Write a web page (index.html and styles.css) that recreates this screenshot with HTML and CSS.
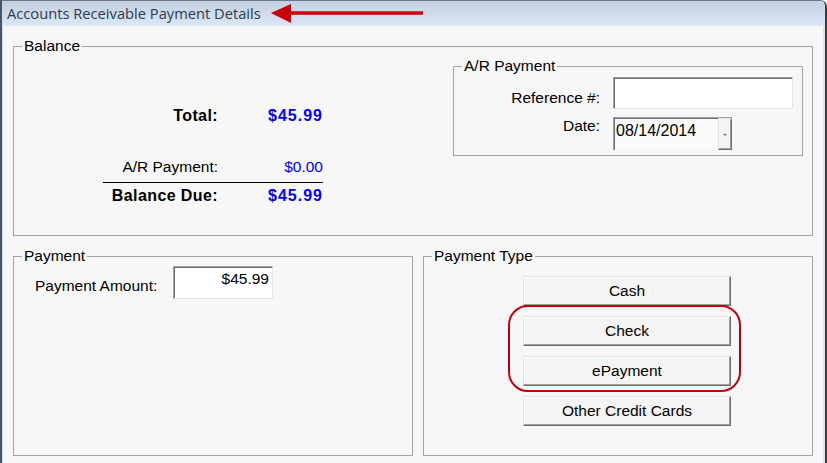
FILE: index.html
```html
<!DOCTYPE html>
<html lang="en">
<head>
<meta charset="utf-8">
<title>Accounts Receivable Payment Details</title>
<link rel="stylesheet" href="styles.css">
</head>
<body>
<div class="window">
  <div class="titlebar">
    <span class="title">Accounts Receivable Payment Details</span>
    <svg class="callout-arrow" width="152" height="21" viewBox="0 0 152 21" aria-hidden="true">
      <path d="M0 10 L20 1 L20 8.3 L152 8.3 L152 11.7 L20 11.7 L20 20 Z" fill="#c8000b"/>
    </svg>
  </div>
  <div class="client">
    <fieldset class="group balance">
      <legend>Balance</legend>
      <div class="balance-body">
        <div class="summary">
          <div class="sum-row total"><span class="lbl">Total:</span><span class="val">$45.99</span></div>
          <div class="sum-row applied"><span class="lbl">A/R Payment:</span><span class="val">$0.00</span></div>
          <div class="sum-row due"><span class="lbl">Balance Due:</span><span class="val">$45.99</span></div>
        </div>
        <fieldset class="group ar">
          <legend>A/R Payment</legend>
          <div class="ar-grid">
            <span class="ref-label">Reference #:</span>
            <div class="textbox ref-box"></div>
            <span class="date-label">Date:</span>
            <div class="datebox">
              <span class="date-text">08/14/2014</span>
              <span class="drop-btn"><span class="drop-mark"></span></span>
            </div>
          </div>
        </fieldset>
      </div>
    </fieldset>
    <div class="lower">
      <fieldset class="group payment">
        <legend>Payment</legend>
        <div class="payment-body">
          <span class="amount-label">Payment Amount:</span>
          <div class="textbox amount-box">$45.99</div>
        </div>
      </fieldset>
      <fieldset class="group ptype">
        <legend>Payment Type</legend>
        <div class="ptype-body">
          <div class="btns">
            <div class="btn" role="button" tabindex="0">Cash</div>
            <div class="btn" role="button" tabindex="0">Check</div>
            <div class="btn" role="button" tabindex="0">ePayment</div>
            <div class="btn" role="button" tabindex="0">Other Credit Cards</div>
            <span class="ring" aria-hidden="true"></span>
          </div>
        </div>
      </fieldset>
    </div>
  </div>
</div>
</body>
</html>
```
FILE: styles.css
```css
html, body {
  margin: 0;
  padding: 0;
  background: #f7f7f7;
}

body {
  font-family: "Liberation Sans", Arial, sans-serif;
  font-size: 15.5px;
  color: #000;
}

.window {
  box-sizing: border-box;
  width: 827px;
  height: 463px;
  display: flex;
  flex-direction: column;
  border-left: 2px solid #4a5466;
  border-right: 2px solid #3c3c3c;
  border-top-right-radius: 7px;
  overflow: hidden;
  background: #f7f7f7;
}

.titlebar {
  height: 26px;
  flex: none;
  display: flex;
  align-items: flex-start;
  padding-left: 5px;
  background: linear-gradient(#c3d0e0, #dbe7f5);
  border-top: 1px solid #6b7585;
  box-sizing: border-box;
}

.title {
  font-family: "Open Sans", "Noto Sans", sans-serif;
  font-size: 14.7px;
  line-height: 25px;
  color: #2e3b4e;
  white-space: nowrap;
}

.callout-arrow {
  display: block;
  margin-left: 10px;
  margin-top: 2px;
  flex: none;
}

.client {
  flex: 1;
  display: flex;
  flex-direction: column;
  gap: 11px;
  padding: 11px 10px 0 10px;
  border-left: 1px solid #cddbed;
  border-right: 2px solid #d6e4f4;
  background: #f7f7f7;
}

/* group boxes */
.group {
  box-sizing: border-box;
  margin: 0;
  padding: 0;
  min-width: 0;
  border: 1px solid #a3a3a3;
}

.group > legend {
  margin-left: 8px;
  padding: 0 2px;
  line-height: 18px;
  font-size: 15.5px;
}

.balance {
  height: 199px;
}

.balance-body {
  display: flex;
  justify-content: space-between;
  align-items: flex-start;
  padding: 2px 9px 0 0;
}

.summary {
  margin-left: 89px;
  padding-top: 50px;
  width: 220px;
}

.sum-row {
  display: grid;
  grid-template-columns: 115px 105px;
  text-align: right;
  line-height: 18px;
}

.sum-row .val {
  color: #0000f5;
}

.total, .due {
  font-weight: bold;
  font-size: 16px;
  letter-spacing: 0.4px;
}

.total .val, .due .val {
  letter-spacing: 1px;
}

.applied {
  margin-top: 33px;
  padding-bottom: 6px;
  border-bottom: 1px solid #000;
}

.due {
  margin-top: 4px;
}

.ar {
  width: 350px;
  flex: none;
}

.ar-grid {
  display: grid;
  grid-template-columns: 146px 180px;
  column-gap: 13px;
  row-gap: 8px;
  padding: 2px 9px 5px 0;
  line-height: 18px;
}

.ref-label, .date-label {
  text-align: right;
}

.ref-label {
  padding-top: 12px;
}

.date-label {
  padding-top: 0;
}

.textbox {
  box-sizing: border-box;
  background: #fff;
  border: 1px solid;
  border-color: #a0a0a0 #e3e3e3 #e3e3e3 #a0a0a0;
  box-shadow: inset 1px 1px 0 #6d6d6d;
}

.ref-box {
  height: 32px;
}

.datebox {
  box-sizing: border-box;
  width: 119px;
  height: 33px;
  display: flex;
  justify-content: space-between;
  align-items: flex-start;
  background: #fafafa;
  border-top: 1px solid #a0a0a0;
  border-left: 1px solid #a0a0a0;
  box-shadow: inset 1px 1px 0 #6d6d6d;
}

.date-text {
  padding: 4px 0 0 2px;
  font-size: 16px;
  line-height: 18px;
}

.drop-btn {
  box-sizing: border-box;
  width: 14px;
  height: 32px;
  display: flex;
  justify-content: center;
  align-items: flex-start;
  background: #f4f4f4;
  border: 1px solid;
  border-color: #e3e3e3 #6d6d6d #6d6d6d #e3e3e3;
  box-shadow: inset -1px -1px 0 #a0a0a0;
}

.drop-mark {
  margin-top: 15px;
  width: 0;
  height: 0;
  border-left: 2px solid transparent;
  border-right: 2px solid transparent;
  border-top: 2px solid #707070;
}

.lower {
  display: flex;
  gap: 10px;
}

.payment {
  width: 400px;
  height: 209px;
}

.payment-body {
  display: flex;
  align-items: flex-start;
  padding: 1px 0 0 21px;
}

.amount-label {
  width: 138px;
  flex: none;
  margin-top: 11px;
  line-height: 18px;
}

.amount-box {
  width: 100px;
  height: 33px;
  text-align: right;
  padding: 3px 3px 0 0;
  line-height: 18px;
}

.ptype {
  width: 390px;
  height: 209px;
}

.ptype-body {
  padding: 11px 0 0 99px;
}

.btns {
  position: relative;
  width: 208px;
  display: flex;
  flex-direction: column;
  gap: 10px;
}

.btn {
  box-sizing: border-box;
  width: 208px;
  height: 30px;
  display: flex;
  align-items: center;
  justify-content: center;
  color: #000;
  background: #f4f4f4;
  border: 1px solid;
  border-color: #e3e3e3 #6d6d6d #6d6d6d #e3e3e3;
  box-shadow: inset -1px -1px 0 #a0a0a0, inset 1px 1px 0 #ffffff;
  cursor: default;
}

.ring {
  position: absolute;
  left: -15px;
  top: 29px;
  width: 233px;
  height: 87px;
  box-sizing: border-box;
  border: 2px solid #c0000c;
  border-radius: 20px;
  pointer-events: none;
}
```
